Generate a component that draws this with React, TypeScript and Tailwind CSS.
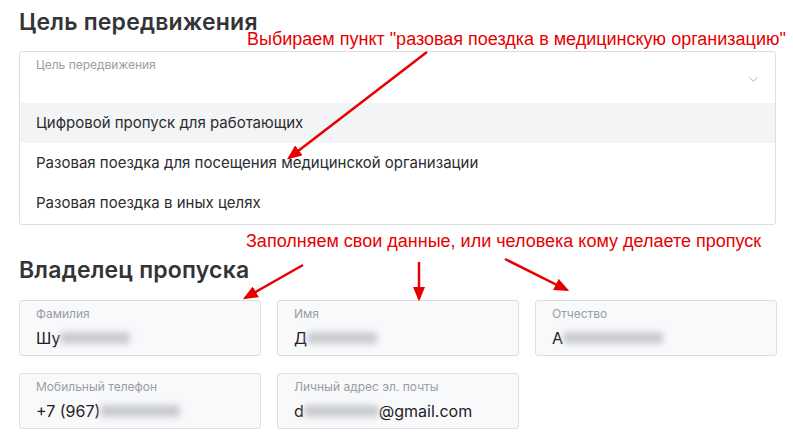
import { ChevronDown } from 'lucide-react';

const font = { fontFamily: 'Inter, "Noto Sans", sans-serif' };

function Field({ label, first, hidden, rest }: { label: string; first: string; hidden: number; rest?: string }) {
  return (
    <div className="h-[56px] w-[242px] rounded-[3px] border border-[#dcdee2] bg-[#f8f9fb] px-[16px] pt-[4px]">
      <div className="text-[12px] leading-[18px] text-[#9a9da3]">{label}</div>
      <div className="mt-[4px] flex items-center text-[16px] leading-[22px] text-[#1f2023]">
        <span>{first}</span>
        <span className="blur-[3px] bg-[#c9cbcf] h-[12px] rounded" style={{ width: hidden }} />
        {rest && <span>{rest}</span>}
      </div>
    </div>
  );
}

export default function App() {
  return (
    <div className="relative w-[793px] h-[439px] overflow-hidden bg-white pl-[19px]" style={font}>
      <h1 className="pt-[6px] text-[23px] leading-[32px] font-semibold text-[#333436] tracking-[0.2px]">Цель передвижения</h1>

      <div className="mt-[13px] w-[757px] rounded-[3px] border border-[#dcdee2] bg-white">
        <div className="relative h-[51px] px-[16px] pt-[4px]">
          <div className="text-[12px] leading-[18px] text-[#9a9da3]">Цель передвижения</div>
          <ChevronDown className="absolute right-[14px] top-[20px] text-[#a9acb1]" size={15} strokeWidth={1.5} />
        </div>
        <div className="flex h-[40px] items-center bg-[#f3f4f6] px-[16px] text-[15px] text-[#2b2c2e]">Цифровой пропуск для работающих</div>
        <div className="flex h-[40px] items-center px-[16px] text-[15px] text-[#2b2c2e]">Разовая поездка для посещения медицинской организации</div>
        <div className="flex h-[41px] items-center px-[16px] text-[15px] text-[#2b2c2e]">Разовая поездка в иных целях</div>
      </div>

      <h2 className="mt-[29px] text-[23px] leading-[32px] font-semibold text-[#333436] tracking-[0.2px]">Владелец пропуска</h2>

      <div className="mt-[14px] flex gap-[16px]">
        <Field label="Фамилия" first="Шу" hidden={70} />
        <Field label="Имя" first="Д" hidden={70} />
        <Field label="Отчество" first="А" hidden={100} />
      </div>
      <div className="mt-[17px] flex gap-[16px]">
        <Field label="Мобильный телефон" first="+7 (967) " hidden={80} />
        <Field label="Личный адрес эл. почты" first="d" hidden={75} rest="@gmail.com" />
      </div>

      <div className="absolute left-[247px] top-[29px] text-[18px] leading-[20px] text-[#e60000]" style={{ fontFamily: '"Liberation Sans", Arial, sans-serif' }}>
        Выбираем пункт "разовая поездка в медицинскую организацию"
      </div>
      <div className="absolute left-[246px] top-[231px] text-[18px] leading-[20px] text-[#e60000]" style={{ fontFamily: '"Liberation Sans", Arial, sans-serif' }}>
        Заполняем свои данные, или человека кому делаете пропуск
      </div>

      <svg className="absolute left-0 top-0 pointer-events-none" width="793" height="439">
        <defs>
          <marker id="ah" markerWidth="6" markerHeight="5" refX="5" refY="2.5" orient="auto" markerUnits="strokeWidth">
            <path d="M0,0 L6,2.5 L0,5 z" fill="#e60000" />
          </marker>
        </defs>
        <g stroke="#e60000" strokeWidth="2.5" fill="none" markerEnd="url(#ah)">
          <line x1="427" y1="52" x2="289" y2="158" />
          <line x1="303" y1="265" x2="245" y2="298" />
          <line x1="419" y1="262" x2="419" y2="299" />
          <line x1="505" y1="259" x2="567" y2="290" />
        </g>
      </svg>
    </div>
  );
}
